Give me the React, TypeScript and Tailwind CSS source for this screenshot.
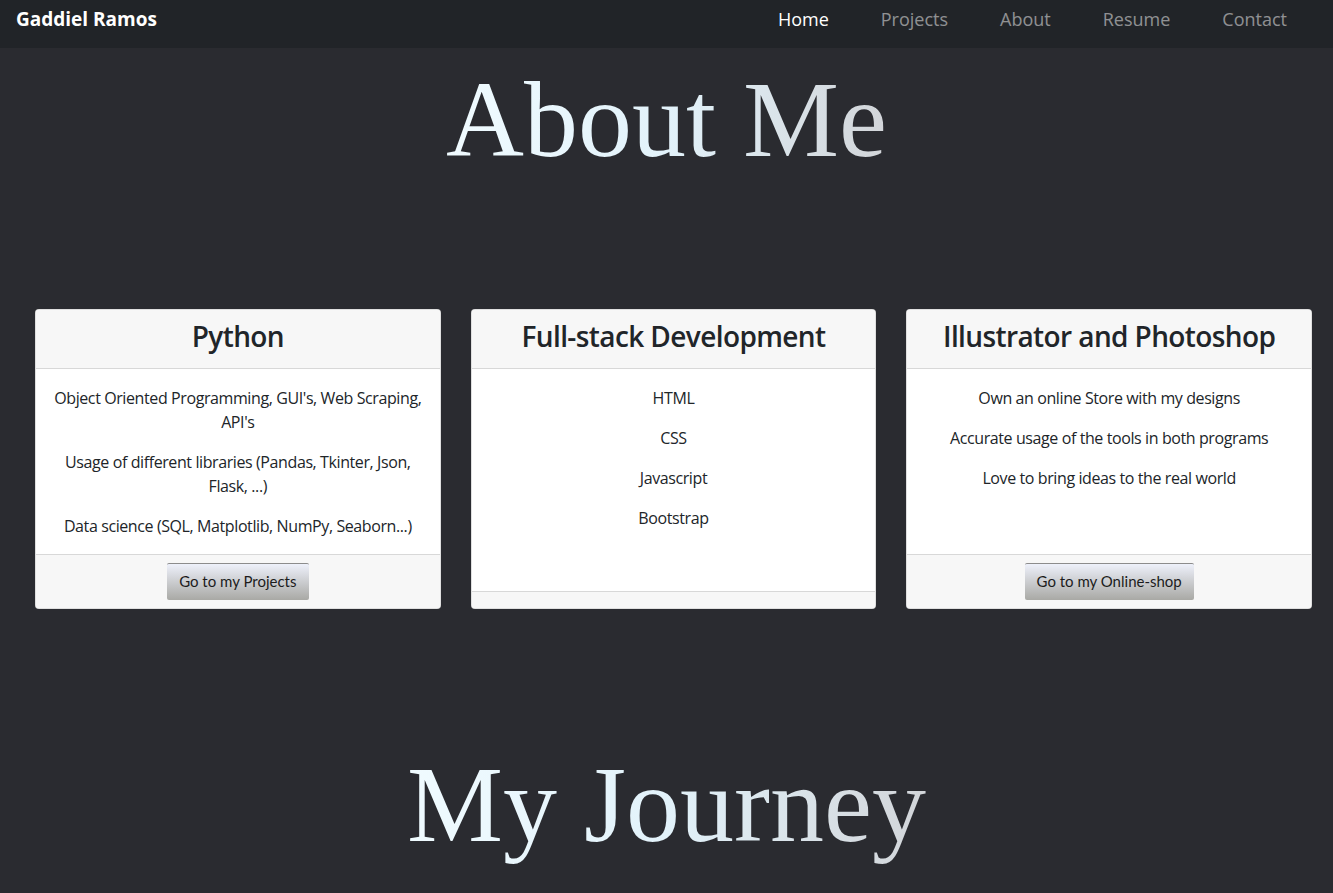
import type { ReactNode } from "react";

const sans = "font-['Segoe_UI','Open_Sans','Noto_Sans',sans-serif]";
const serif = "font-['Liberation_Serif','DejaVu_Serif',serif]";

const links = ["Home", "Projects", "About", "Resume", "Contact"];

interface CardProps {
  title: string;
  items: string[];
  button?: string;
}

const GradientHeading = ({ children }: { children: ReactNode }) => (
  <h1
    className={`${serif} text-center text-[108px] leading-none font-normal`}
  >
    <span className="bg-gradient-to-r from-[#f0fbff] via-[#e2f2fa] to-[#d2d5d9] bg-clip-text text-transparent">
      {children}
    </span>
  </h1>
);

const Card = ({ title, items, button }: CardProps) => (
  <div className="flex flex-col bg-white border border-black/[.125] rounded-[4px] overflow-hidden text-[#212529]">
    <div className="bg-[#f7f7f7] border-b border-black/[.125] px-5 pt-[10px] pb-[14px]">
      <h3 className="text-center text-[28px] leading-[1.2] font-semibold tracking-[-0.6px]">
        {title}
      </h3>
    </div>
    <div className="flex-1 px-4 pt-[17px] text-center text-base leading-6 tracking-[-0.4px]">
      {items.map((it) => (
        <p key={it} className="mb-4">
          {it}
        </p>
      ))}
    </div>
    <div className="bg-[#f7f7f7] border-t border-black/[.125] pt-2 pb-2 flex justify-center">
      {button && (
        <button className="h-[37px] px-3 rounded-[2px] border-t border-[#8c8c8c] bg-gradient-to-b from-[#eef1fb] to-[#a9a9a5] text-[15px] text-[#1c1c1c] font-['Lato',sans-serif]">
          {button}
        </button>
      )}
    </div>
  </div>
);

export default function App() {
  return (
    <div className={`${sans} min-h-[893px] bg-[#2a2b30]`}>
      <nav className="h-12 bg-[#212428] flex items-start justify-between pt-[5px] pl-4 pr-[46px]">
        <span className="text-white text-[19px] leading-7 font-bold">
          Gaddiel Ramos
        </span>
        <ul className="flex gap-[52px] text-[18px] leading-7">
          {links.map((l, i) => (
            <li
              key={l}
              className={i === 0 ? "text-white" : "text-white/50"}
            >
              {l}
            </li>
          ))}
        </ul>
      </nav>

      <div className="pt-[18px]">
        <GradientHeading>About Me</GradientHeading>
      </div>

      <div className="grid grid-cols-3 gap-[30px] pl-[35px] pr-[21px] mt-[135px]">
        <Card
          title="Python"
          items={[
            "Object Oriented Programming, GUI's, Web Scraping, API's",
            "Usage of different libraries (Pandas, Tkinter, Json, Flask, ...)",
            "Data science (SQL, Matplotlib, NumPy, Seaborn...)",
          ]}
          button="Go to my Projects"
        />
        <Card
          title="Full-stack Development"
          items={["HTML", "CSS", "Javascript", "Bootstrap"]}
        />
        <Card
          title="Illustrator and Photoshop"
          items={[
            "Own an online Store with my designs",
            "Accurate usage of the tools in both programs",
            "Love to bring ideas to the real world",
          ]}
          button="Go to my Online-shop"
        />
      </div>

      <div className="mt-[142px] pb-10">
        <GradientHeading>My Journey</GradientHeading>
      </div>
    </div>
  );
}
